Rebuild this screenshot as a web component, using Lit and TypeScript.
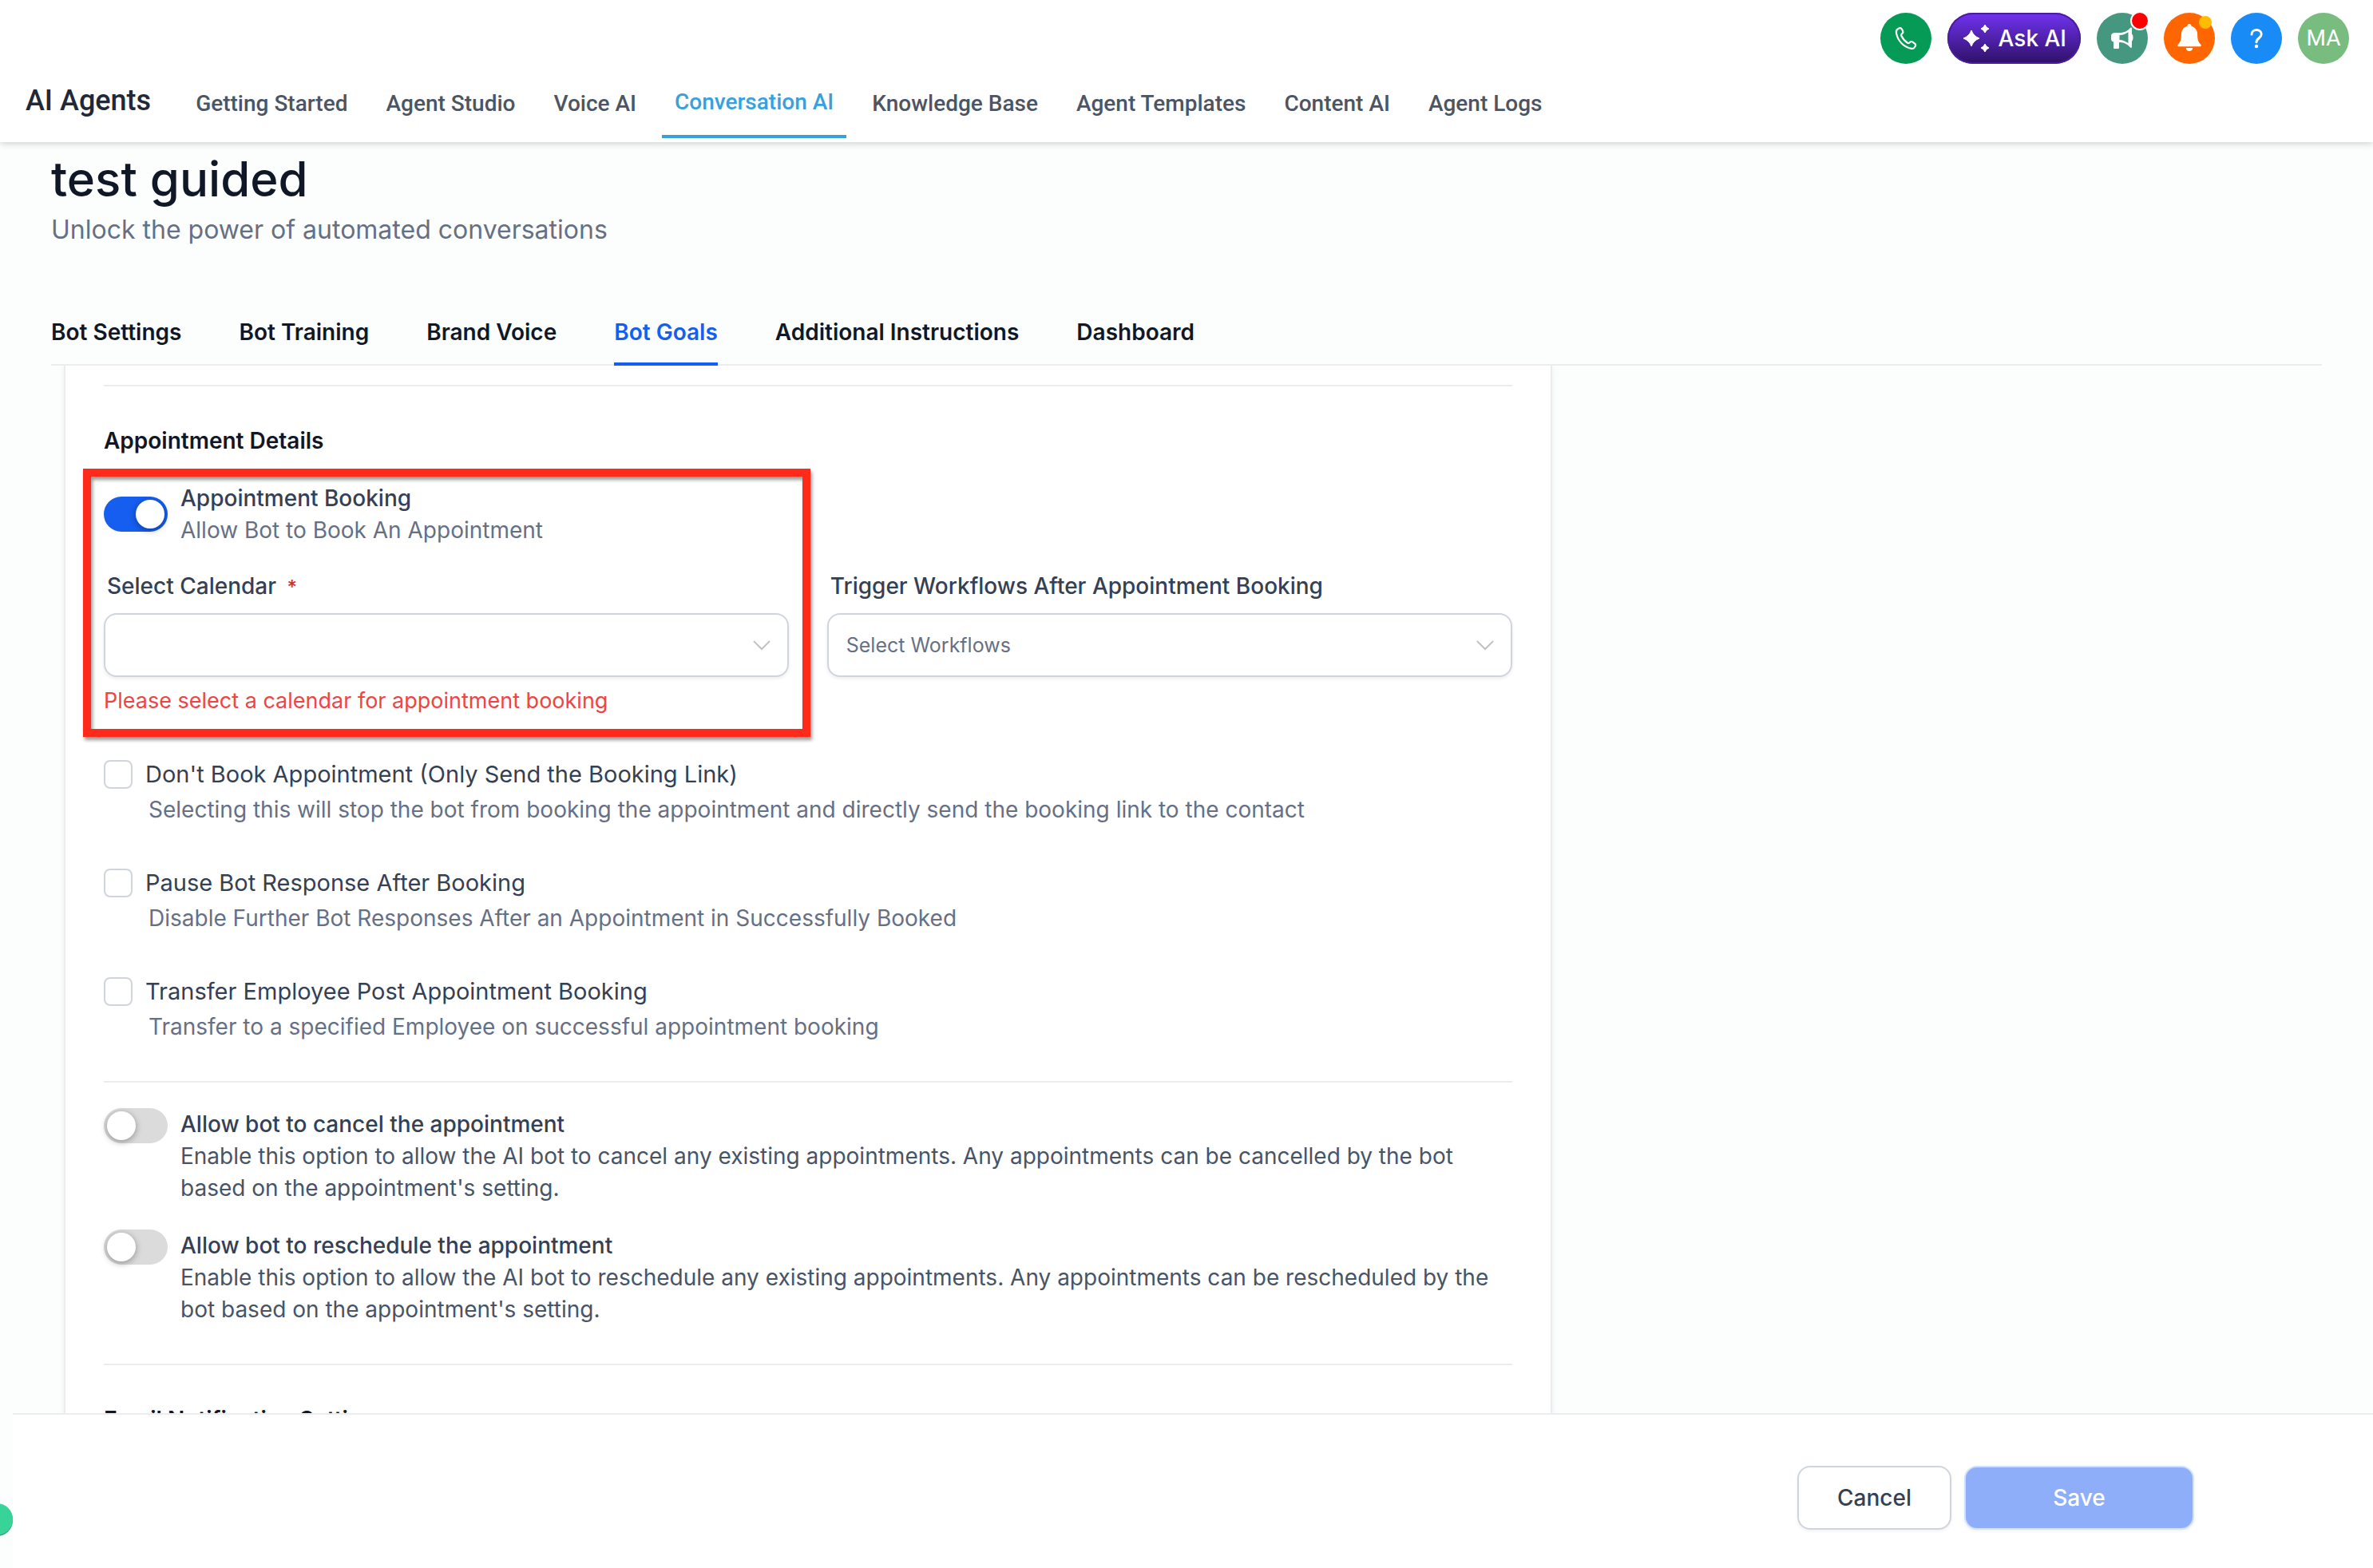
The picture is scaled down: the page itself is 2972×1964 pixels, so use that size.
import { LitElement, html, css, svg } from "lit";
import { customElement, property, state } from "lit/decorators.js";
import { classMap } from "lit/directives/class-map.js";

const PRIMARY_NAV = [
  "Getting Started",
  "Agent Studio",
  "Voice AI",
  "Conversation AI",
  "Knowledge Base",
  "Agent Templates",
  "Content AI",
  "Agent Logs",
];

const BOT_TABS = [
  "Bot Settings",
  "Bot Training",
  "Brand Voice",
  "Bot Goals",
  "Additional Instructions",
  "Dashboard",
];

const BOOKING_OPTIONS = [
  {
    id: "link-only",
    label: "Don't Book Appointment (Only Send the Booking Link)",
    hint: "Selecting this will stop the bot from booking the appointment and directly send the booking link to the contact",
  },
  {
    id: "pause",
    label: "Pause Bot Response After Booking",
    hint: "Disable Further Bot Responses After an Appointment in Successfully Booked",
  },
  {
    id: "transfer",
    label: "Transfer Employee Post Appointment Booking",
    hint: "Transfer to a specified Employee on successful appointment booking",
  },
];

const PERMISSIONS = [
  {
    id: "cancel",
    label: "Allow bot to cancel the appointment",
    hint: "Enable this option to allow the AI bot to cancel any existing appointments. Any appointments can be cancelled by the bot based on the appointment's setting.",
  },
  {
    id: "reschedule",
    label: "Allow bot to reschedule the appointment",
    hint: "Enable this option to allow the AI bot to reschedule any existing appointments. Any appointments can be rescheduled by the bot based on the appointment's setting.",
  },
];

const phoneIcon = svg`
  <path fill="none" stroke="#fff" stroke-width="2.2" stroke-linejoin="round"
    d="M22 20.2l1.8-.9c1.2-.5 2.400-.1 3 1l1.300 2.500c.5 1 .3 2.200-.5 3l-1 1c-.5.6-.6 1.300-.3 2 1.700 3.700 4.300 6.700 7.800 8.900.7.4 1.500.4 2.100-.1l1.200-.9c.9-.7 2.100-.7 3 0l2.700 2c1 .8 1.300 2.100.6 3.200l-1.100 1.600c-.8 1.200-2.200 1.700-3.600 1.400C29.700 43 22.200 36.200 20 25.600c-.4-2.200.1-4.400 2-5.400z"/>`;

const star = (x: number, y: number, r: number) => {
  const k = r * 0.27;
  return svg`<path fill="#fff" stroke="#fff" stroke-width="1" stroke-linejoin="round"
    d="M${x} ${y - r}Q${x + k} ${y - k} ${x + r} ${y}Q${x + k} ${y + k} ${x} ${y + r}Q${x - k} ${y + k} ${x - r} ${y}Q${x - k} ${y - k} ${x} ${y - r}z"/>`;
};

const megaphoneIcon = svg`
  <path fill="#fff" fill-rule="evenodd"
    d="M23.500 25H29c5.500 0 9.800-2.300 13-6 .8-.9 2-.5 2 .7v7.100c1 .6 1.500 2 1.500 4.200s-.5 3.800-1.500 4.400v7.300c0 1.200-1.200 1.600-2 .7-3.200-3.600-7.300-6-12.500-6.300H28V43.500c0 1-.6 1.500-1.500 1.500h-4c-.9 0-1.500-.5-1.500-1.500v-7c-2-.6-3-1.700-3-4V29c0-2.700 2-4 5.500-4zM28.500 28v6c4.200.2 7.700 1.600 11 4V24.200c-3.300 2.300-6.800 3.600-11 3.800z"/>`;

const bellIcon = svg`
  <path fill="#fff"
    d="M32 14c1.500 0 2.500 1 2.500 2.700 4.800 1.300 7.600 5.200 7.600 10.300 0 6.500.9 9.600 4.200 12.800 1 1 .4 2.500-1 2.500H18.700c-1.400 0-2-1.500-1-2.500 3.300-3.200 4.200-6.300 4.200-12.800 0-5.100 2.800-9 7.600-10.300C29.500 15 30.500 14 32 14zM27.700 44h8.600c-.2 2.500-1.900 4-4.300 4s-4.100-1.500-4.300-4z"/>`;

const questionIcon = svg`
  <path fill="none" stroke="#fff" stroke-width="3" stroke-linecap="round"
    d="M26 27c0-3.200 2.600-5.400 6.100-5.400 3.600 0 6.100 2.300 6.100 5.400 0 4.600-6.200 4.900-6.200 9.800"/>
  <circle cx="32" cy="42" r="2.200" fill="#fff"/>`;

@customElement("top-actions")
export class TopActions extends LitElement {
  static styles = css`
    :host {
      display: flex;
      justify-content: flex-end;
      gap: 20px;
      padding: 16px 30px 0;
    }
    button {
      position: relative;
      width: 64px;
      height: 64px;
      padding: 0;
      border: 0;
      border-radius: 50%;
      color: #fff;
      font: 400 28px/64px Roboto, sans-serif;
      cursor: pointer;
    }
    svg {
      display: block;
      width: 64px;
      height: 64px;
    }
    .phone { background: #059a55; }
    .news { background: #459780; }
    .alerts { background: #ff6600; }
    .help { background: #188bf6; }
    .avatar { background: #78bd7f; }
    .ask {
      display: flex;
      width: auto;
      padding-right: 18px;
      border-radius: 32px;
      background: linear-gradient(#7133f1, #2e1065);
      box-shadow: inset 0 0 0 2px #4a1d9e;
      font: 500 28px/64px Inter, sans-serif;
    }
    .dot {
      position: absolute;
      border-radius: 50%;
    }
    .dot.red {
      top: -2px;
      right: -2px;
      width: 20px;
      height: 20px;
      border: 2px solid #fff;
      background: #f00;
    }
    .dot.amber {
      top: 4px;
      right: 4px;
      width: 16px;
      height: 16px;
      background: #ffbc00;
    }
  `;

  render() {
    return html`
      <button class="phone" aria-label="Phone">
        <svg viewBox="0 0 64 64" aria-hidden="true">${phoneIcon}</svg>
      </button>
      <button class="ask">
        <svg viewBox="0 0 64 64" aria-hidden="true">
          ${star(30, 32, 10)}${star(47, 20, 5)}${star(47, 44, 5)}
        </svg>
        <span>Ask AI</span>
      </button>
      <button class="news" aria-label="Announcements">
        <svg viewBox="0 0 64 64" aria-hidden="true">${megaphoneIcon}</svg>
        <span class="dot red"></span>
      </button>
      <button class="alerts" aria-label="Notifications">
        <svg viewBox="0 0 64 64" aria-hidden="true">${bellIcon}</svg>
        <span class="dot amber"></span>
      </button>
      <button class="help" aria-label="Help">
        <svg viewBox="0 0 64 64" aria-hidden="true">${questionIcon}</svg>
      </button>
      <button class="avatar">MA</button>
    `;
  }
}

@customElement("toggle-row")
export class ToggleRow extends LitElement {
  static styles = css`
    :host {
      display: flex;
      gap: 16px;
      align-items: flex-start;
      font: 400 28px/40px Inter, sans-serif;
    }
    :host([centered]) {
      align-items: center;
    }
    input {
      appearance: none;
      flex: none;
      width: 80px;
      height: 44px;
      margin: 0;
      padding: 4px;
      border-radius: 22px;
      background: #dbdbdb;
      cursor: pointer;
    }
    input::before {
      content: "";
      display: block;
      width: 36px;
      height: 36px;
      border-radius: 50%;
      background: #fff;
      box-shadow: 0 2px 8px rgba(0, 0, 0, 0.35);
    }
    input:checked {
      background: #155eef;
    }
    input:checked::before {
      margin-left: auto;
    }
    label {
      display: block;
      color: #344054;
      font-weight: 500;
    }
    p {
      margin: 0;
      color: #475467;
    }
    :host([centered]) p {
      color: #667085;
    }
  `;

  @property() label = "";
  @property() hint = "";
  @property({ type: Boolean }) checked = false;
  @property({ type: Boolean, reflect: true }) centered = false;

  render() {
    return html`
      <input id="switch" type="checkbox" role="switch" aria-describedby="hint" .checked=${this.checked} />
      <div>
        <label for="switch">${this.label}</label>
        <p id="hint">${this.hint}</p>
      </div>
    `;
  }
}

@customElement("app-root")
export class AppRoot extends LitElement {
  static styles = css`
    :host {
      display: flex;
      flex-direction: column;
      height: 100vh;
      overflow: hidden;
      position: relative;
      background: #fcfefd;
      color: #101828;
      font: 400 28px/40px Inter, sans-serif;
    }
    h1, h2, p { margin: 0; }
    a { color: inherit; text-decoration: none; }

    .header {
      position: relative;
      flex: none;
      background: #fff;
      box-shadow: 0 2px 8px rgba(0, 0, 0, 0.18);
    }
    .primary {
      display: flex;
      align-items: center;
      height: 98px;
      padding-left: 32px;
      font-family: Roboto, sans-serif;
      font-weight: 500;
    }
    .brand {
      margin-right: 40px;
      padding-bottom: 6px;
      color: #1f2937;
      font-size: 36px;
    }
    .links {
      display: flex;
      align-items: center;
      gap: 16px;
      color: #4b5563;
    }
    .links a { padding: 23px 16px 21px; }
    .links a.active {
      border-bottom: 4px solid #38a0db;
      color: #38a0db;
    }

    .main {
      display: flex;
      flex-direction: column;
      flex: 1;
      min-height: 0;
      padding: 10px 64px 0;
    }
    .title {
      font-size: 60px;
      font-weight: 500;
      line-height: 72px;
    }
    .subtitle {
      margin: 4px 0 84px;
      color: #667085;
      font-size: 32px;
      line-height: 48px;
    }
    .tabs {
      display: flex;
      gap: 72px;
      border-bottom: 2px solid #eaecf0;
      font-weight: 600;
    }
    .tabs a {
      margin-bottom: -2px;
      padding-bottom: 18px;
      border-bottom: 4px solid transparent;
    }
    .tabs a.active {
      border-color: #155eef;
      color: #155eef;
    }

    .scroll {
      flex: 1;
      min-height: 0;
      overflow: hidden;
      padding-left: 18px;
    }
    .card {
      box-sizing: border-box;
      width: 65.8%;
      padding: 24px 48px 48px;
      background: #fff;
      box-shadow: 0 0 0 2px #eaecf0, 0 0 8px rgba(16, 24, 40, 0.1);
    }
    .card hr {
      height: 2px;
      margin: 0;
      border: 0;
      background: #eaecf0;
    }
    .heading {
      margin: 48px 0 32px;
      font-size: 28px;
      font-weight: 600;
      line-height: 40px;
    }

    .booking { position: relative; }
    .fields {
      display: grid;
      grid-template-columns: 1fr 1fr;
      gap: 48px;
      margin-top: 30px;
    }
    .field label {
      display: block;
      padding-left: 4px;
      color: #344054;
      font-weight: 500;
    }
    .required {
      margin-left: 6px;
      color: #d92d20;
      font-size: 24px;
      line-height: 24px;
    }
    .control {
      display: grid;
      margin-top: 14px;
    }
    .control > * { grid-area: 1 / 1; }
    .control svg {
      justify-self: end;
      align-self: center;
      width: 24px;
      height: 24px;
      margin-right: 22px;
      pointer-events: none;
    }
    select {
      appearance: none;
      width: 100%;
      height: 80px;
      padding: 0 22px;
      border: 2px solid #d0d5dd;
      border-radius: 16px;
      background: #fff;
      box-shadow: 0 2px 4px rgba(16, 24, 40, 0.08);
      color: #667085;
      font: 400 25px/40px Inter, sans-serif;
    }
    .error {
      margin-top: 10px;
      color: #ef4444;
      font-size: 27px;
    }
    .highlight {
      position: absolute;
      box-sizing: border-box;
      top: -17px;
      bottom: -25px;
      left: -26px;
      width: calc(50% + 29px);
      border: 10px solid #ff2a1a;
      filter: drop-shadow(2px 4px 2px rgba(0, 0, 0, 0.4));
      pointer-events: none;
    }

    .options {
      display: grid;
      gap: 50px;
      margin: 50px 0 48px;
    }
    .option {
      display: grid;
      grid-template-columns: 36px 1fr;
      column-gap: 16px;
      align-items: center;
    }
    .option input {
      appearance: none;
      width: 36px;
      height: 36px;
      margin: 0;
      border: 2px solid #d0d5dd;
      border-radius: 8px;
      background: #fff;
    }
    .option label {
      color: #344054;
      font-size: 29px;
      line-height: 44px;
    }
    .option p {
      grid-column: 2;
      margin-top: 2px;
      padding-left: 4px;
      color: #667085;
    }
    .permissions {
      display: grid;
      gap: 32px;
      margin: 32px 0 48px;
    }

    .footer {
      display: flex;
      flex: none;
      justify-content: flex-end;
      gap: 16px;
      margin-left: 16px;
      padding: 64px 224px 48px;
      border-top: 2px solid #eaecf0;
      background: #fff;
    }
    .footer button {
      height: 80px;
      padding: 0 48px;
      border: 2px solid #d0d5dd;
      border-radius: 16px;
      background: #fff;
      box-shadow: 0 2px 4px rgba(16, 24, 40, 0.06);
      color: #344054;
      font: 500 28px/40px Inter, sans-serif;
    }
    .footer button.save {
      min-width: 288px;
      border-color: #d1e0ff;
      background: #8faef9;
      color: #fff;
    }
    .bubble {
      position: absolute;
      bottom: 41px;
      left: -24px;
      width: 40px;
      height: 40px;
      padding: 0;
      border: 0;
      border-radius: 50%;
      background: #37d399;
      box-shadow: 0 1px 1px #1f7a58;
    }
  `;

  @state() private section = "Conversation AI";
  @state() private tab = "Bot Goals";

  private chevron() {
    return html`<svg viewBox="0 0 24 24" aria-hidden="true">
      <path d="M2 7l10 10L22 7" fill="none" stroke="#c2c2c2" stroke-width="2" />
    </svg>`;
  }

  private pick(event: Event, apply: () => void) {
    event.preventDefault();
    apply();
  }

  render() {
    return html`
      <header class="header">
        <top-actions></top-actions>
        <div class="primary">
          <span class="brand">AI Agents</span>
          <nav class="links" aria-label="AI Agents">
            ${PRIMARY_NAV.map(
              (name) => html`<a
                href="#"
                class=${classMap({ active: name === this.section })}
                @click=${(e: Event) => this.pick(e, () => (this.section = name))}
                >${name}</a
              >`
            )}
          </nav>
        </div>
      </header>

      <main class="main">
        <h1 class="title">test guided</h1>
        <p class="subtitle">Unlock the power of automated conversations</p>
        <nav class="tabs" aria-label="Bot">
          ${BOT_TABS.map(
            (name) => html`<a
              href="#"
              class=${classMap({ active: name === this.tab })}
              @click=${(e: Event) => this.pick(e, () => (this.tab = name))}
              >${name}</a
            >`
          )}
        </nav>

        <div class="scroll">
          <div class="card">
            <hr />
            <h2 class="heading">Appointment Details</h2>
            <section class="booking">
              <toggle-row
                centered
                checked
                label="Appointment Booking"
                hint="Allow Bot to Book An Appointment"
              ></toggle-row>
              <div class="fields">
                <div class="field">
                  <label for="calendar">Select Calendar <span class="required">*</span></label>
                  <div class="control">
                    <select id="calendar" required aria-describedby="calendar-error">
                      <option value=""></option>
                    </select>
                    ${this.chevron()}
                  </div>
                  <p class="error" id="calendar-error">Please select a calendar for appointment booking</p>
                </div>
                <div class="field">
                  <label for="workflows">Trigger Workflows After Appointment Booking</label>
                  <div class="control">
                    <select id="workflows">
                      <option value="">Select Workflows</option>
                    </select>
                    ${this.chevron()}
                  </div>
                </div>
              </div>
              <div class="highlight"></div>
            </section>

            <div class="options">
              ${BOOKING_OPTIONS.map(
                (o) => html`<div class="option">
                  <input type="checkbox" id=${o.id} />
                  <label for=${o.id}>${o.label}</label>
                  <p>${o.hint}</p>
                </div>`
              )}
            </div>
            <hr />
            <div class="permissions">
              ${PERMISSIONS.map((p) => html`<toggle-row .label=${p.label} .hint=${p.hint}></toggle-row>`)}
            </div>
            <hr />
            <h2 class="heading">Email Notification Settings</h2>
          </div>
        </div>
      </main>

      <footer class="footer">
        <button>Cancel</button>
        <button class="save">Save</button>
      </footer>
      <button class="bubble" aria-label="Expand sidebar"></button>
    `;
  }
}
